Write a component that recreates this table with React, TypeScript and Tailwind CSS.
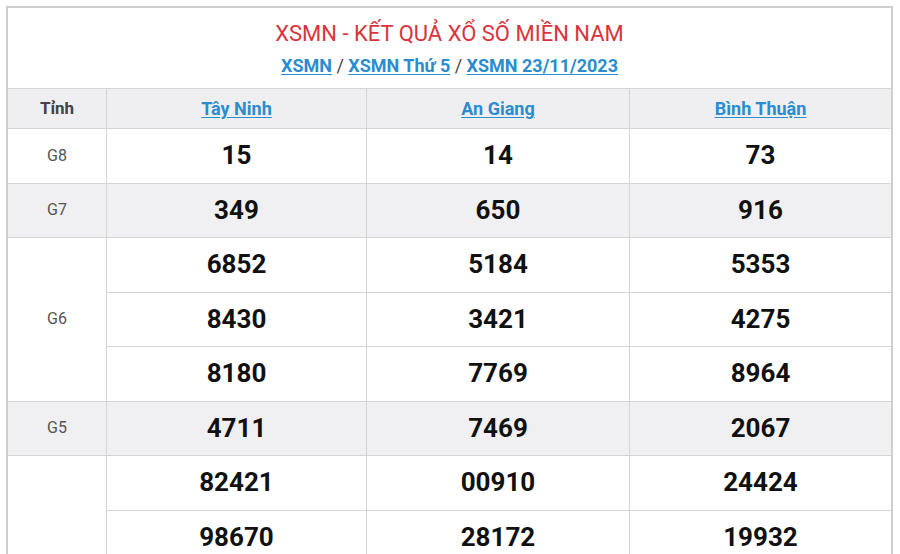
import React from "react";

const cols = ["Tây Ninh", "An Giang", "Bình Thuận"];

type Row = { label: string; values: string[][]; shaded: boolean };

const rows: Row[] = [
  { label: "G8", values: [["15", "14", "73"]], shaded: false },
  { label: "G7", values: [["349", "650", "916"]], shaded: true },
  {
    label: "G6",
    values: [
      ["6852", "5184", "5353"],
      ["8430", "3421", "4275"],
      ["8180", "7769", "8964"],
    ],
    shaded: false,
  },
  { label: "G5", values: [["4711", "7469", "2067"]], shaded: true },
  {
    label: "",
    values: [
      ["82421", "00910", "24424"],
      ["98670", "28172", "19932"],
    ],
    shaded: false,
  },
];

export default function App() {
  return (
    <div
      className="w-[900px] h-[554px] overflow-hidden bg-white pl-[6px] pt-[6px] pr-[7px]"
      style={{ fontFamily: "Roboto, 'Noto Sans', sans-serif" }}
    >
      <div className="border-[2px] border-b-0 border-[#cfcfcf] bg-white h-[600px]">
        <div className="h-[80px] flex flex-col items-center">
          <div className="mt-[12px] text-[22px] leading-[28px] text-[#d8343d]">
            XSMN - KẾT QUẢ XỔ SỐ MIỀN NAM
          </div>
          <div className="mt-[6px] text-[18px] leading-[24px] font-bold text-[#444]">
            <a className="text-[#2b8ccf] underline underline-offset-2">XSMN</a>
            <span className="font-normal"> / </span>
            <a className="text-[#2b8ccf] underline underline-offset-2">XSMN Thứ 5</a>
            <span className="font-normal"> / </span>
            <a className="text-[#2b8ccf] underline underline-offset-2">XSMN 23/11/2023</a>
          </div>
        </div>
        <div className="grid grid-cols-[99px_260px_263px_1fr] border-t border-[#d4d4d4]">
          <div className="h-[40px] bg-[#efeff1] border-r border-b border-[#d4d4d4] flex items-center justify-center text-[17px] font-bold text-[#444]">
            Tỉnh
          </div>
          {cols.map((c, i) => (
            <div
              key={c}
              className={`h-[40px] bg-[#efeff1] border-b border-[#d4d4d4] flex items-center justify-center ${
                i < 2 ? "border-r" : ""
              }`}
            >
              <a className="text-[18px] font-bold text-[#2b8ccf] underline underline-offset-2">{c}</a>
            </div>
          ))}
          {rows.map((r, ri) => (
            <React.Fragment key={ri}>
              <div
                className={`border-r border-b border-[#d4d4d4] flex items-center justify-center text-[16px] text-[#555] ${
                  r.shaded ? "bg-[#f0f0f2]" : "bg-white"
                } ${r.values.length === 3 ? "row-span-3" : r.values.length === 2 ? "row-span-2" : ""}`}
              >
                {r.label}
              </div>
              {r.values.map((vals, vi) =>
                vals.map((v, ci) => (
                  <div
                    key={`${vi}-${ci}`}
                    className={`h-[54.5px] border-b border-[#d4d4d4] flex items-center justify-center text-[26px] font-bold text-[#111] ${
                      ci < 2 ? "border-r" : ""
                    } ${r.shaded ? "bg-[#f0f0f2]" : "bg-white"} ${
                      vi === 0 && ci === 0 && r.values.length > 1 ? "col-start-2" : ""
                    } ${vi > 0 && ci === 0 ? "col-start-2" : ""}`}
                  >
                    {v}
                  </div>
                ))
              )}
            </React.Fragment>
          ))}
        </div>
      </div>
    </div>
  );
}
